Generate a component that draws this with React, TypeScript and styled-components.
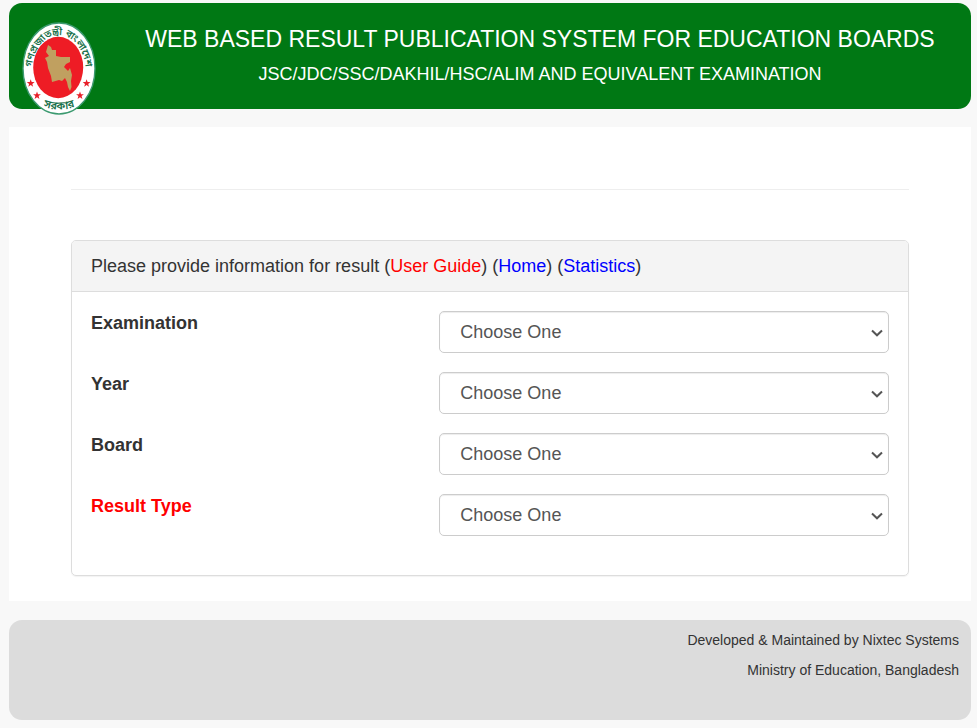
import React from "react";
import styled, { createGlobalStyle } from "styled-components";

const GlobalStyle = createGlobalStyle`
  *, *::before, *::after { box-sizing: border-box; }
  body {
    margin: 0;
    background: #f8f8f8;
    color: #333;
    font-family: "Liberation Sans", Arial, Helvetica, sans-serif;
    font-size: 18px;
    line-height: 26px;
  }
`;

const Page = styled.div`
  display: flex;
  flex-direction: column;
  gap: 18px;
  padding: 3px 6px 8px 9px;
`;

const Header = styled.header`
  display: flex;
  height: 106px;
  border-radius: 13px;
  background: #007814;
  color: #fff;
`;

const LogoCell = styled.div`
  flex: 0 0 100px;
  padding: 19px 0 0 13px;
`;

const Seal = styled.svg`
  display: block;
  width: 74px;
  height: 93px;
`;

const Titles = styled.div`
  flex: 1;
  display: flex;
  flex-direction: column;
  align-items: center;
  gap: 8px;
  padding-top: 22px;
`;

const Title = styled.h1`
  margin: 0;
  font-size: 23px;
  font-weight: 400;
  line-height: 28px;
`;

const Subtitle = styled.h2`
  margin: 0;
  font-size: 18px;
  font-weight: 400;
  line-height: 26px;
`;

const Main = styled.main`
  padding: 62px 62px 25px;
  background: #fff;
`;

const Rule = styled.hr`
  height: 1px;
  margin: 0 0 50px;
  border: 0;
  background: #eee;
`;

const Panel = styled.section`
  border: 1px solid #ddd;
  border-radius: 5px;
  box-shadow: 0 1px 1px rgba(0, 0, 0, 0.05);
  overflow: hidden;
`;

const PanelHeading = styled.div`
  padding: 12px 19px;
  border-bottom: 1px solid #ddd;
  background: #f4f4f4;
`;

const HeadingLink = styled.a<{ $tone: string }>`
  color: ${(p) => p.$tone};
  text-decoration: none;
`;

const Form = styled.form`
  display: flex;
  flex-direction: column;
  gap: 19px;
  padding: 19px 0 39px;
`;

const Row = styled.div`
  display: grid;
  grid-template-columns: 5fr 7fr;
`;

const Label = styled.label<{ $required?: boolean }>`
  padding: 0 19px;
  line-height: 24px;
  font-weight: 700;
  color: ${(p) => (p.$required ? "#f00" : "#333")};
`;

const SelectCell = styled.div`
  position: relative;
  padding: 0 19px;
`;

const Select = styled.select`
  display: block;
  appearance: none;
  width: 100%;
  height: 42px;
  padding: 0 40px 0 20px;
  border: 1px solid #ccc;
  border-radius: 5px;
  background: #fff;
  box-shadow: inset 0 1px 1px rgba(0, 0, 0, 0.075);
  color: #555;
  font: inherit;
`;

const Chevron = styled.svg`
  position: absolute;
  top: 18px;
  right: 25px;
  width: 12px;
  height: 8px;
  pointer-events: none;
`;

const Footer = styled.footer`
  min-height: 100px;
  margin-top: 1px;
  padding: 5px 12px;
  border-radius: 13px;
  background: #dcdcdc;
  font-size: 14px;
  line-height: 30px;
  text-align: right;
`;

const FooterLine = styled.p`
  margin: 0;
`;

const STAR = "0,-4 1,-1.3 3.9,-1.2 1.6,0.6 2.4,3.4 0,1.8 -2.4,3.4 -1.6,0.6 -3.9,-1.2 -1,-1.3";
const STARS = [[8.7, 61.3], [15, 73.5], [58, 73.5], [64.6, 61.3]];

function GovernmentSeal() {
  return (
    <Seal viewBox="0 0 74 93" role="img" aria-label="Government seal of Bangladesh">
      <defs>
        <path id="seal-top" d="M9.7 50 A27 37 0 0 1 63.7 50" />
        <path id="seal-bottom" d="M17 83 Q37 92 57 83" />
      </defs>
      <ellipse cx="37" cy="46.5" rx="36" ry="45.5" fill="#fff" stroke="#3c9a70" strokeWidth="1.4" />
      <ellipse cx="36.2" cy="45.5" rx="25" ry="30.7" fill="#ee1c25" />
      <path
        fill="#c0a060"
        d="M26 23 L29 25 L30 28 L34 28 L34 34 L39 35 L48 35 L48 40 L44 42 L42 45 L46 49 L48 46 L50 53 L49 59 L49.5 65 L48 69 L46 65 L45 60 L43 56 L40 59 L37 58 L30 60 L29 54 L26 46 L25 40 L23 36 L27 34 L24 30 Z"
      />
      {STARS.map(([x, y]) => (
        <polygon key={x} points={STAR} transform={`translate(${x} ${y})`} fill="#e8202a" />
      ))}
      <g fill="#17704a" fontFamily='"Noto Sans Bengali", "Noto Sans", sans-serif' fontWeight="600" textAnchor="middle">
        <text fontSize="10"><textPath href="#seal-top" startOffset="50%">গণপ্রজাতন্ত্রী বাংলাদেশ</textPath></text>
        <text fontSize="11"><textPath href="#seal-bottom" startOffset="50%">সরকার</textPath></text>
      </g>
    </Seal>
  );
}

const FIELDS = [
  { id: "exam", label: "Examination" },
  { id: "year", label: "Year" },
  { id: "board", label: "Board" },
  { id: "result_type", label: "Result Type", required: true },
];

export default function App() {
  return (
    <>
      <GlobalStyle />
      <Page>
        <Header>
          <LogoCell><GovernmentSeal /></LogoCell>
          <Titles>
            <Title>WEB BASED RESULT PUBLICATION SYSTEM FOR EDUCATION BOARDS</Title>
            <Subtitle>JSC/JDC/SSC/DAKHIL/HSC/ALIM AND EQUIVALENT EXAMINATION</Subtitle>
          </Titles>
        </Header>
        <Main>
          <Rule />
          <Panel>
            <PanelHeading>
              Please provide information for result (
              <HeadingLink href="#guide" $tone="#f00">User Guide</HeadingLink>) (
              <HeadingLink href="#home" $tone="#00f">Home</HeadingLink>) (
              <HeadingLink href="#statistics" $tone="#00f">Statistics</HeadingLink>)
            </PanelHeading>
            <Form>
              {FIELDS.map((f) => (
                <Row key={f.id}>
                  <Label htmlFor={f.id} $required={f.required}>{f.label}</Label>
                  <SelectCell>
                    <Select id={f.id} name={f.id} defaultValue="">
                      <option value="">Choose One</option>
                    </Select>
                    <Chevron viewBox="0 0 12 8" aria-hidden="true">
                      <path d="M1 1.5 L6 6.3 L11 1.5" fill="none" stroke="#555" strokeWidth="2" />
                    </Chevron>
                  </SelectCell>
                </Row>
              ))}
            </Form>
          </Panel>
        </Main>
        <Footer>
          <FooterLine>Developed &amp; Maintained by Nixtec Systems</FooterLine>
          <FooterLine>Ministry of Education, Bangladesh</FooterLine>
        </Footer>
      </Page>
    </>
  );
}
